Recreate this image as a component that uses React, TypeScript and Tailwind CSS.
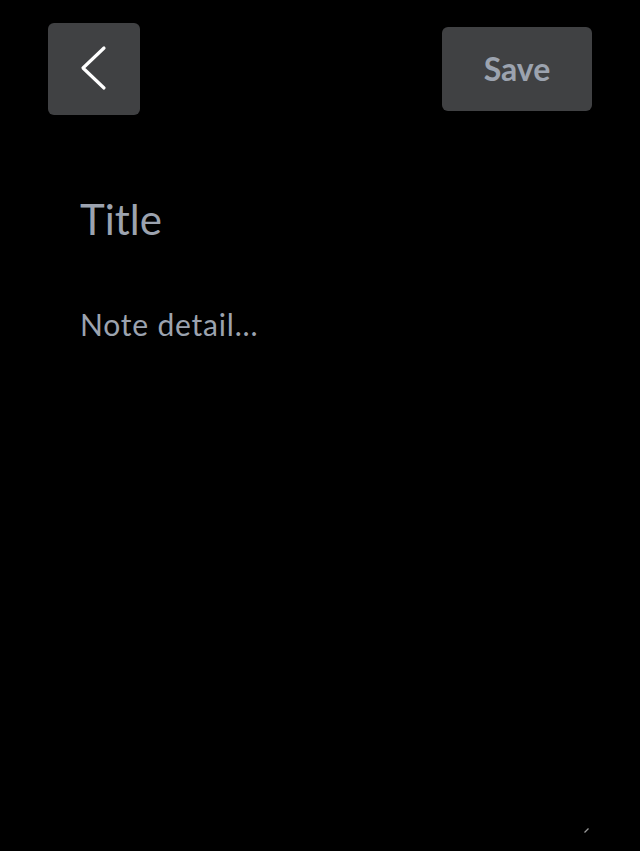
import React from "react";

export default function App() {
  return (
    <div
      className="min-h-[851px] w-full bg-black flex flex-col"
      style={{ fontFamily: "Lato, 'Noto Sans', sans-serif" }}
    >
      <div className="flex items-center justify-between px-12 pt-[23px]">
        <button className="w-[92px] h-[92px] rounded-md bg-[#404143] flex items-center justify-center">
          <svg width="92" height="92" viewBox="0 0 92 92" fill="none">
            <polyline
              points="56,25 35,45 56,65"
              stroke="white"
              strokeWidth="3.2"
              strokeLinecap="round"
              strokeLinejoin="round"
            />
          </svg>
        </button>
        <button className="w-[150px] h-[84px] rounded-md bg-[#404143] flex items-center justify-center text-[32px] leading-[38px] font-bold text-[#9ca3af]">
          Save
        </button>
      </div>
      <div className="flex flex-col px-20 pr-12">
        <input
          className="mt-[78px] bg-transparent outline-none text-[42px] leading-[52px] h-[52px] text-gray-400 placeholder:text-[#9ca3af]"
          placeholder="Title"
        />
        <div className="relative mt-[61px]">
          <textarea
            className="w-full h-[528px] block bg-transparent outline-none resize-none text-[30px] leading-[36px] tracking-[0.8px] text-gray-400 placeholder:text-[#9ca3af]"
            placeholder="Note detail..."
          />
          <svg
            className="absolute right-[1px] bottom-[0px]"
            width="8"
            height="8"
            viewBox="0 0 8 8"
          >
            <line x1="1.5" y1="6.5" x2="5.5" y2="2.5" stroke="#9a9a9a" strokeWidth="1.2" />
          </svg>
        </div>
      </div>
    </div>
  );
}
